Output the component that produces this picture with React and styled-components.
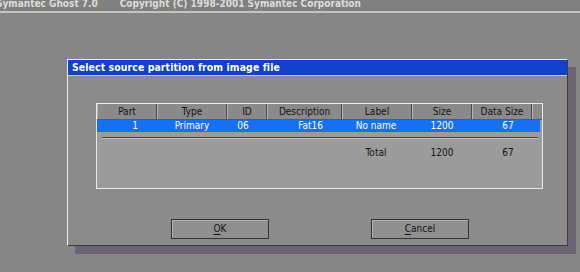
import styled, { createGlobalStyle } from "styled-components";

const GlobalStyle = createGlobalStyle`
  html, body {
    margin: 0;
    padding: 0;
    background: #868686;
    overflow: hidden;
  }
`;

// column widths taken from the header of the partition list
const columns = [
  { title: "Part", width: 60, align: "right", pad: 19 },
  { title: "Type", width: 70, align: "center", pad: 0 },
  { title: "ID", width: 40, align: "center", pad: -8 },
  { title: "Description", width: 75, align: "center", pad: 12 },
  { title: "Label", width: 70, align: "center", pad: -2 },
  { title: "Size", width: 60, align: "center", pad: 0 },
  { title: "Data Size", width: 60, align: "center", pad: 12 },
];

const rows = [["1", "Primary", "06", "Fat16", "No name", "1200", "67"]];
const total = ["", "", "", "", "Total", "1200", "67"];

const App = () => {
  return (
    <>
      <GlobalStyle />
      <Screen>
        <TopBar>
          <TopText>Symantec Ghost 7.0</TopText>
          <TopText>Copyright (C) 1998-2001 Symantec Corporation</TopText>
        </TopBar>
        <Dialog>
          <TitleBar>Select source partition from image file</TitleBar>
          <Body>
            <Table>
              <HeaderRow>
                {columns.map((c) => (
                  <HeaderCell key={c.title} $w={c.width}>
                    {c.title}
                  </HeaderCell>
                ))}
                <HeaderCell $w={10} />
              </HeaderRow>
              {rows.map((r, i) => (
                <Row key={i} $selected>
                  {r.map((v, j) => (
                    <Cell key={j} $w={columns[j].width} $align={columns[j].align} $pad={columns[j].pad}>
                      {v}
                    </Cell>
                  ))}
                </Row>
              ))}
              <Separator />
              <Row $total>
                {total.map((v, j) => (
                  <Cell key={j} $w={columns[j].width} $align={columns[j].align} $pad={columns[j].pad}>
                    {v}
                  </Cell>
                ))}
              </Row>
            </Table>
            <ButtonRow>
              <Button>
                <u>O</u>K
              </Button>
              <Button>
                <u>C</u>ancel
              </Button>
            </ButtonRow>
          </Body>
        </Dialog>
      </Screen>
    </>
  );
};

export default App;

const Screen = styled.div`
  width: 580px;
  height: 272px;
  background: #868686;
  font-family: "DejaVu Sans Condensed", "DejaVu Sans", sans-serif;
  overflow: hidden;
`;

const TopBar = styled.div`
  height: 11px;
  border-bottom: 2px solid #c4c4c4;
  display: flex;
  gap: 22px;
  align-items: flex-end;
  overflow: hidden;
  background: #808080;
`;

const TopText = styled.span`
  font-size: 10px;
  font-weight: bold;
  color: #dcdcdc;
  line-height: 11px;
  margin-bottom: 2px;
  white-space: nowrap;
  &:first-child {
    margin-left: -4px;
  }
`;

const Dialog = styled.div`
  width: 499px;
  height: 185px;
  margin: 46px 0 0 67px;
  background: #8b8b8b;
  border: 1px solid;
  border-color: #e8f0e4 #3e3a44 #3e3a44 #e8f0e4;
  box-shadow: 8px 8px 0 #6b6572;
  display: flex;
  flex-direction: column;
`;

const TitleBar = styled.div`
  height: 15px;
  background: #1040cc;
  border-bottom: 1px solid #c8c8c8;
  color: #fff;
  font-size: 10.4px;
  font-weight: bold;
  line-height: 15px;
  padding-left: 4px;
  letter-spacing: 0.1px;
`;

const Body = styled.div`
  flex: 1;
  display: flex;
  flex-direction: column;
  padding: 27px 0 0 28px;
`;

const Table = styled.div`
  width: 445px;
  height: 84px;
  background: #9b9b9b;
  border: 1px solid #eaeaea;
  display: flex;
  flex-direction: column;
`;

const HeaderRow = styled.div`
  display: flex;
  height: 15px;
  border-bottom: 1px solid #5a5a5a;
`;

const HeaderCell = styled.div`
  width: ${(p) => p.$w}px;
  flex: none;
  box-sizing: border-box;
  background: #8a8a8a;
  border-right: 1px solid #4a4a4a;
  border-left: 1px solid #b4b4b4;
  font-size: 10px;
  line-height: 15px;
  text-align: center;
  color: #141414;
  &:last-child {
    border-right: none;
    flex: 1;
  }
`;

const Row = styled.div`
  display: flex;
  height: 12px;
  margin-right: 2px;
  margin-top: ${(p) => (p.$total ? "8px" : "0")};
  background: ${(p) => (p.$selected ? "#1670f0" : "transparent")};
  color: ${(p) => (p.$selected ? "#ffffff" : "#141414")};
`;

const Cell = styled.div`
  width: ${(p) => p.$w}px;
  flex: none;
  box-sizing: border-box;
  font-size: 10px;
  line-height: 12px;
  text-align: ${(p) => p.$align};
  padding-right: ${(p) => (p.$align === "right" ? p.$pad : Math.max(0, -p.$pad))}px;
  padding-left: ${(p) => (p.$align === "right" ? 0 : Math.max(0, p.$pad))}px;
`;

const Separator = styled.div`
  height: 1px;
  margin: 5px 4px 0 5px;
  background: #3c3c3c;
  border-bottom: 1px solid #c4c4c4;
`;

const ButtonRow = styled.div`
  display: flex;
  gap: 102px;
  margin-top: 30px;
  padding-left: 75px;
`;

const Button = styled.div`
  width: 96px;
  height: 18px;
  border: 1px solid #333;
  background: #8f8f8f;
  box-shadow: inset 1px 1px 0 #b0b0b0;
  color: #141414;
  font-size: 10px;
  line-height: 18px;
  text-align: center;
  u {
    text-underline-offset: 2px;
  }
`;
